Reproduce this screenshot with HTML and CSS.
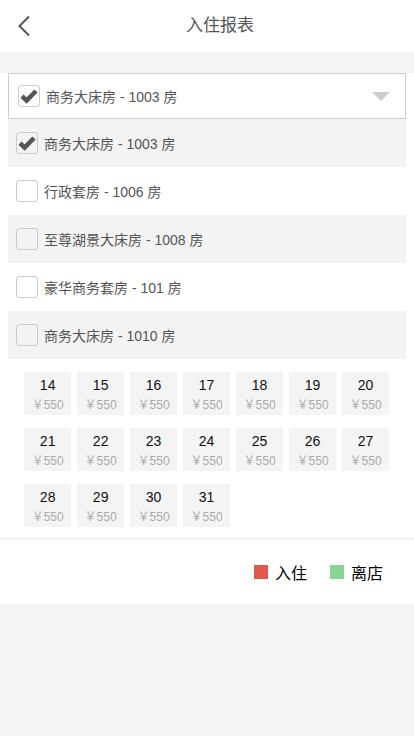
FILE: index.html
```html
<!DOCTYPE html>
<html lang="zh-CN">
<head>
<meta charset="utf-8">
<title>入住报表</title>
<link rel="stylesheet" href="styles.css">
</head>
<body>
<header class="topbar">
  <span class="back">
    <svg width="14" height="22" viewBox="0 0 14 22"><path d="M12 1.5 L2.5 11 L12 20.5" fill="none" stroke="#555" stroke-width="2"/></svg>
  </span>
  <h1 class="title">入住报表</h1>
</header>
<div class="spacer"></div>
<main class="panel">
  <div class="select">
    <span class="box checked"><svg width="18" height="16" viewBox="0 0 18 16"><path d="M2 8.2 L6.6 12.6 L16 3" fill="none" stroke="#555" stroke-width="4.6"/></svg></span>
    <span class="label">商务大床房 - 1003 房</span>
    <span class="caret"></span>
  </div>
  <ul class="rooms">
    <li class="room alt"><span class="box checked"><svg width="18" height="16" viewBox="0 0 18 16"><path d="M2 8.2 L6.6 12.6 L16 3" fill="none" stroke="#555" stroke-width="4.6"/></svg></span><span class="label">商务大床房 - 1003 房</span></li>
    <li class="room"><span class="box"></span><span class="label">行政套房 - 1006 房</span></li>
    <li class="room alt"><span class="box"></span><span class="label">至尊湖景大床房 - 1008 房</span></li>
    <li class="room"><span class="box"></span><span class="label">豪华商务套房 - 101 房</span></li>
    <li class="room alt"><span class="box"></span><span class="label">商务大床房 - 1010 房</span></li>
  </ul>
  <div class="calendar">
    <div class="day"><span class="num">14</span><span class="price">￥550</span></div>
    <div class="day"><span class="num">15</span><span class="price">￥550</span></div>
    <div class="day"><span class="num">16</span><span class="price">￥550</span></div>
    <div class="day"><span class="num">17</span><span class="price">￥550</span></div>
    <div class="day"><span class="num">18</span><span class="price">￥550</span></div>
    <div class="day"><span class="num">19</span><span class="price">￥550</span></div>
    <div class="day"><span class="num">20</span><span class="price">￥550</span></div>
    <div class="day"><span class="num">21</span><span class="price">￥550</span></div>
    <div class="day"><span class="num">22</span><span class="price">￥550</span></div>
    <div class="day"><span class="num">23</span><span class="price">￥550</span></div>
    <div class="day"><span class="num">24</span><span class="price">￥550</span></div>
    <div class="day"><span class="num">25</span><span class="price">￥550</span></div>
    <div class="day"><span class="num">26</span><span class="price">￥550</span></div>
    <div class="day"><span class="num">27</span><span class="price">￥550</span></div>
    <div class="day"><span class="num">28</span><span class="price">￥550</span></div>
    <div class="day"><span class="num">29</span><span class="price">￥550</span></div>
    <div class="day"><span class="num">30</span><span class="price">￥550</span></div>
    <div class="day"><span class="num">31</span><span class="price">￥550</span></div>
  </div>
</main>
<footer class="legend">
  <span class="key"><i class="swatch in"></i>入住</span>
  <span class="key"><i class="swatch out"></i>离店</span>
</footer>
</body>
</html>
```
FILE: styles.css
```css
* { box-sizing: border-box; }
html, body { margin: 0; padding: 0; }
body {
  width: 414px;
  min-height: 736px;
  background: #f4f4f4;
  font-family: "Liberation Sans", "Noto Sans CJK SC", sans-serif;
  color: #555;
}
.topbar {
  height: 52px;
  background: #fff;
  display: flex;
  align-items: center;
  padding-left: 17px;
}
.back { display: flex; width: 14px; height: 22px; }
.title {
  margin: 0 0 0 155px;
  font-size: 17px;
  font-weight: normal;
  color: #555;
  line-height: 20px;
}
.spacer { height: 21px; }
.panel {
  background: #fff;
  padding: 0 8px 10px;
}
.select {
  height: 46px;
  border: 1px solid #ccc;
  display: flex;
  align-items: center;
  padding-left: 9px;
  padding-right: 15px;
}
.box {
  width: 22px;
  height: 22px;
  border: 1px solid #ccc;
  border-radius: 3px;
  background: transparent;
  display: flex;
  align-items: center;
  justify-content: center;
  flex: none;
}
.label {
  margin-left: 6px;
  font-size: 14px;
  color: #555;
  flex: 1;
}
.caret {
  width: 0;
  height: 0;
  border-left: 9px solid transparent;
  border-right: 9px solid transparent;
  border-top: 9px solid #ccc;
}
.rooms { list-style: none; margin: 0; padding: 0; }
.room {
  height: 48px;
  display: flex;
  align-items: center;
  padding-left: 8px;
}
.room.alt { background: #f3f3f3; }
.calendar {
  display: grid;
  grid-template-columns: repeat(7, 47.3px);
  column-gap: 5.7px;
  row-gap: 13px;
  padding: 13px 0 0 16px;
}
.day {
  height: 43px;
  background: #f4f4f4;
  display: flex;
  flex-direction: column;
  align-items: center;
  padding-top: 4px;
}
.num { font-size: 14px; color: #111; line-height: 18px; }
.price { font-size: 12px; color: #aaa; line-height: 18px; margin-top: 2px; }
.legend {
  margin-top: 3px;
  height: 64px;
  background: #fff;
  display: flex;
  justify-content: flex-end;
  align-items: center;
  padding-right: 31px;
  gap: 23px;
  font-size: 16px;
  color: #000;
}
.key { display: flex; align-items: center; gap: 7px; }
.swatch { width: 14px; height: 14px; display: block; }
.swatch.in { background: #e05a4c; }
.swatch.out { background: #88d493; }
```
